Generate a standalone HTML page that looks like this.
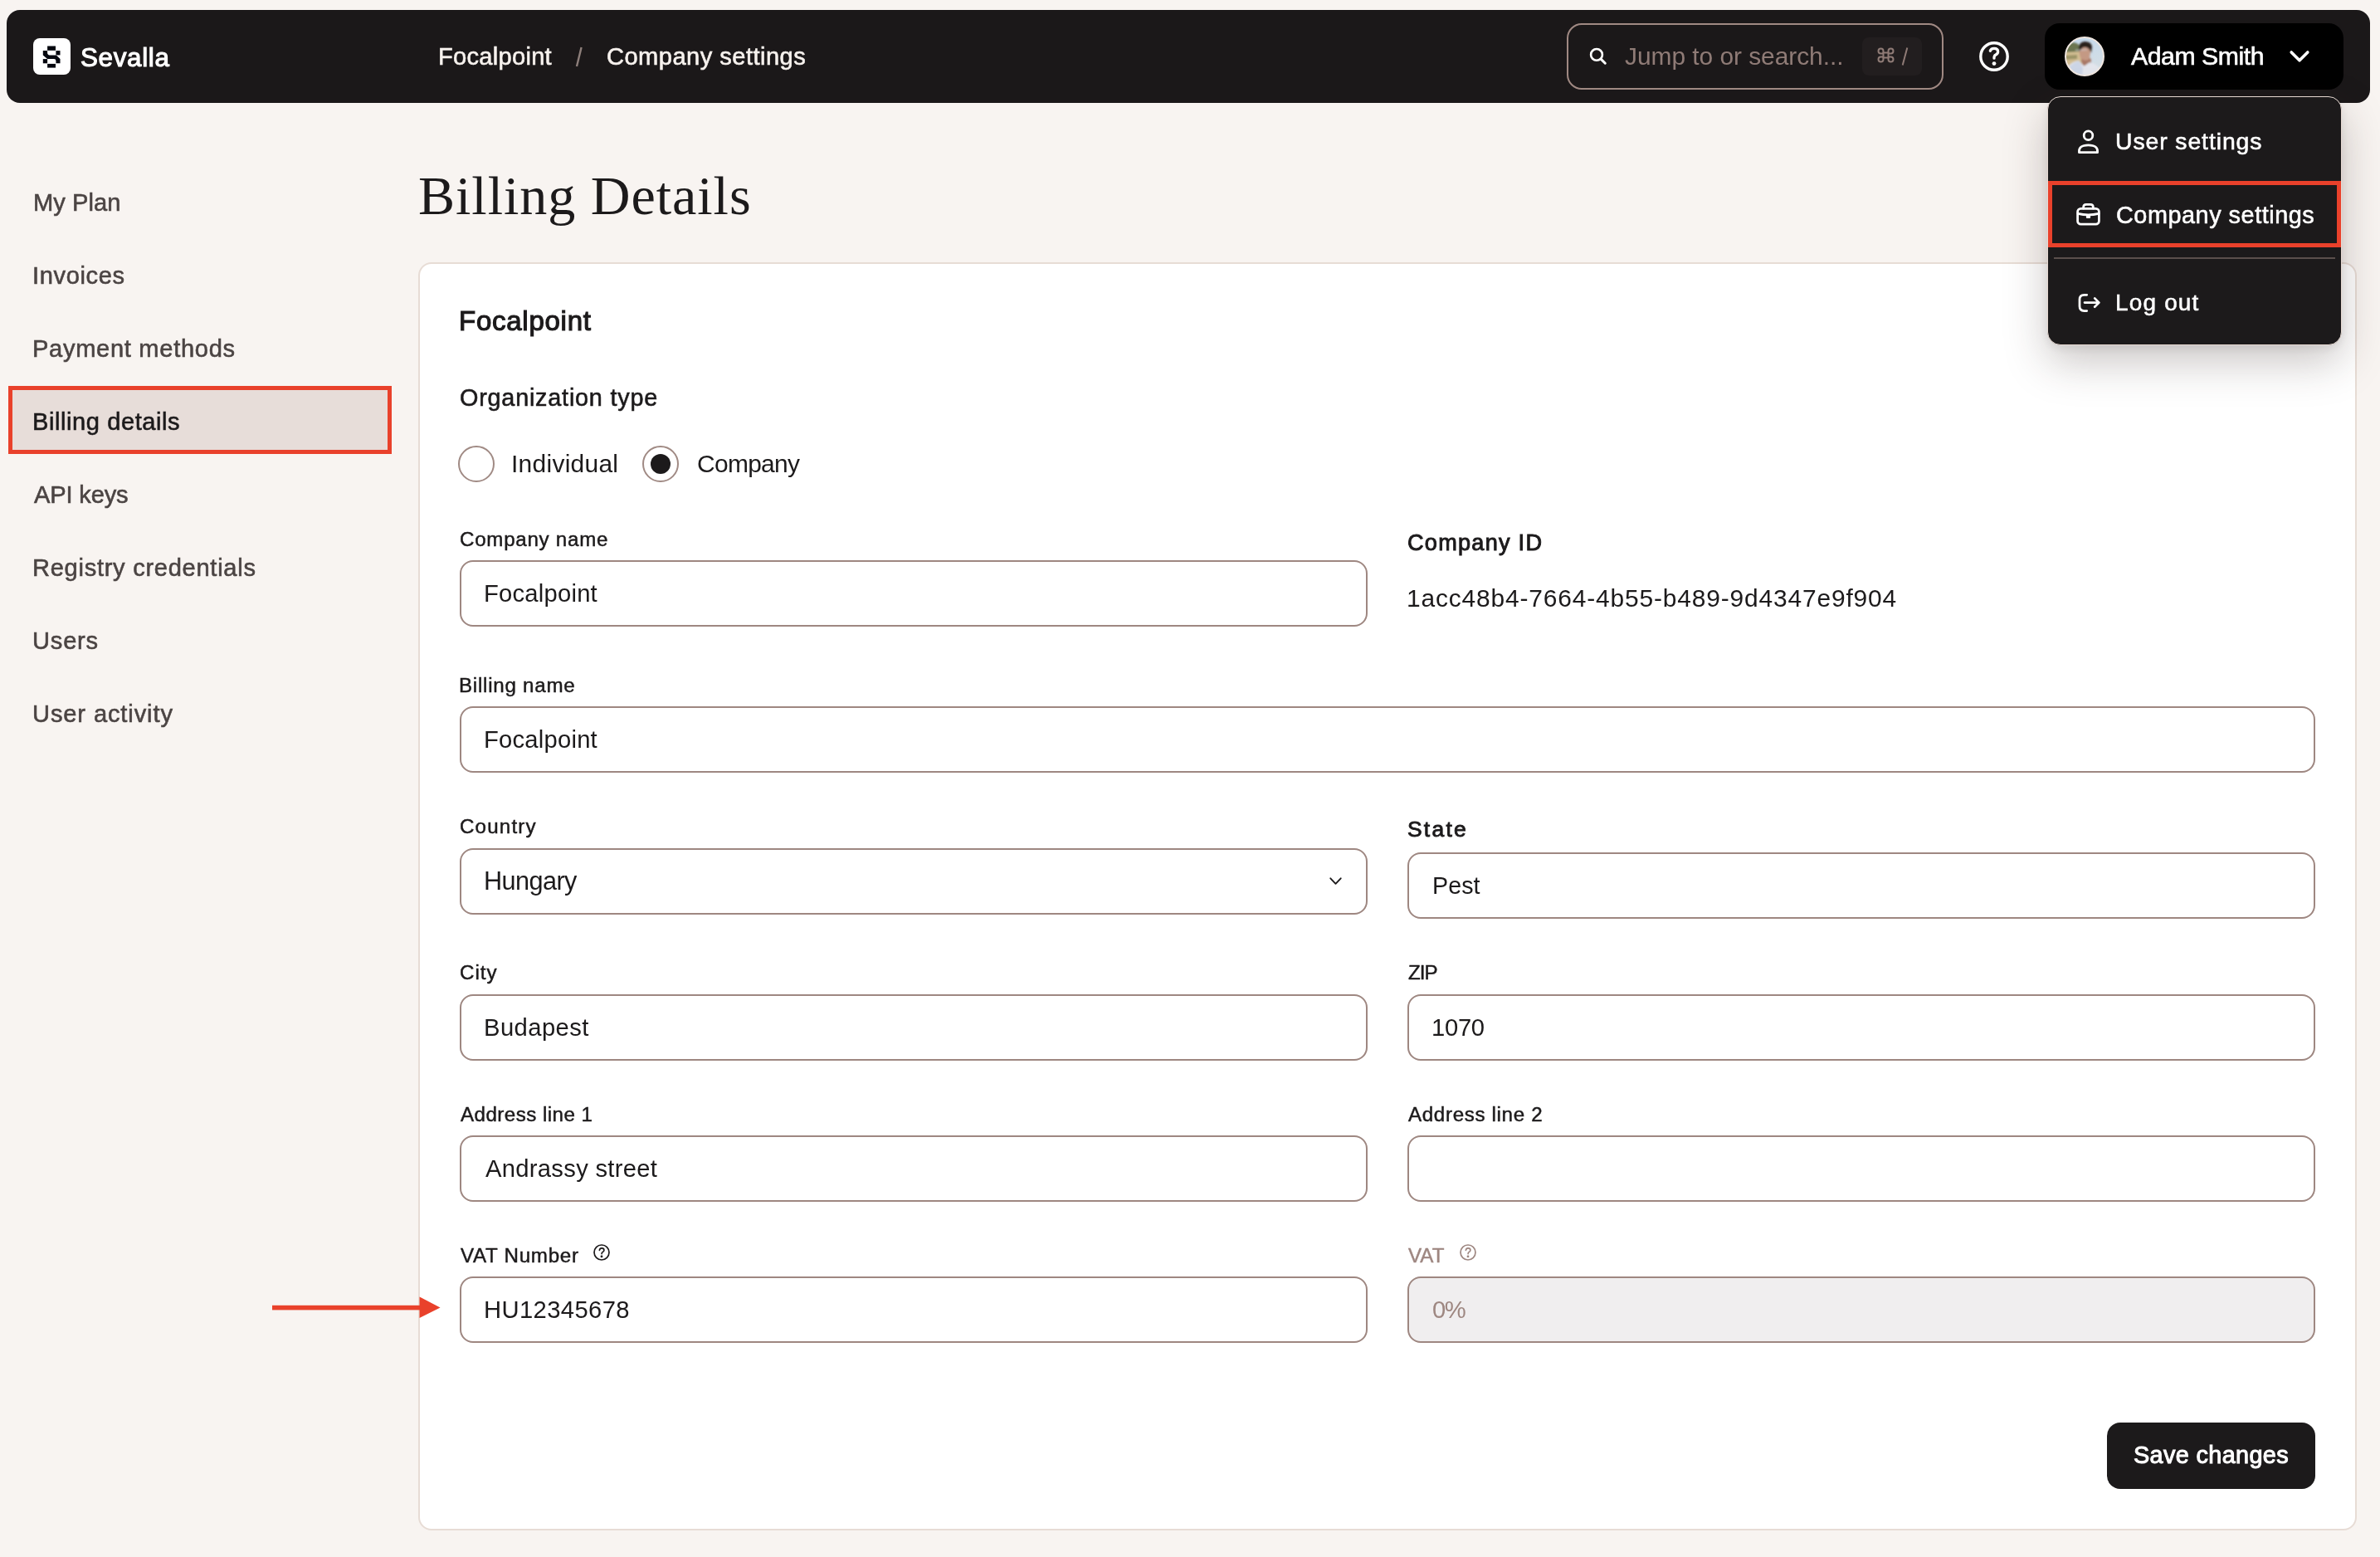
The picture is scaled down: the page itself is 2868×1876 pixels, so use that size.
<!DOCTYPE html><html><head><meta charset="utf-8"><title>Billing Details</title><style>
*{margin:0;padding:0}
html,body{width:2868px;height:1876px;overflow:hidden;background:#f8f4f1}
.b{position:absolute}
.t{position:absolute;will-change:transform}

</style></head><body>
<div class="b" style="left:8px;top:12px;width:2848px;height:112px;border-radius:16px;background:#1b1819;"></div>
<div class="b" style="left:40px;top:46px;width:45px;height:44px;border-radius:8px;background:#fff;"></div>
<svg class="b" style="left:0;top:0" width="120" height="120" viewBox="0 0 120 120">
<g fill="#05070f">
<rect x="57.1" y="55.5" width="9.9" height="5.3"/>
<rect x="67.4" y="61.1" width="5.1" height="5.3"/>
<rect x="51.8" y="71.1" width="5.3" height="5.2"/>
<rect x="57.1" y="76.9" width="9.9" height="4.7"/>
<path d="M51.8 61.1 H57.1 V63.6 Q57.1 66.4 59.8 66.4 H67.8 L72.5 70.9 V76.3 H67.4 V73.2 Q67.4 70.9 65 70.9 H57.1 L51.8 66.4 Z"/>
</g></svg>
<div class="b" style="left:1888px;top:28px;width:454px;height:80px;border-radius:18px;border:2px solid #a08983;box-sizing:border-box;"></div>
<svg class="b" style="left:1900px;top:50px" width="50" height="40" viewBox="1900 50 50 40">
<circle cx="1924" cy="65.9" r="6.9" fill="none" stroke="#fff" stroke-width="2.6"/>
<line x1="1929.4" y1="71.4" x2="1934.3" y2="76.2" stroke="#fff" stroke-width="3" stroke-linecap="round"/>
</svg>
<div class="b" style="left:2244px;top:45px;width:72px;height:46px;border-radius:8px;background:#221e1f;"></div>
<svg class="b" style="left:2250px;top:50px" width="60" height="40" viewBox="2250 50 60 40">
<g fill="none" stroke="#8f7b76" stroke-width="2">
<path d="M2269.5 63.5 h6 v6 h-6 z"/>
<path d="M2269.5 63.5 v-2 a3 3 0 1 0 -3 3 h3"/>
<path d="M2275.5 63.5 v-2 a3 3 0 1 1 3 3 h-3"/>
<path d="M2269.5 69.5 v2 a3 3 0 1 1 -3 -3 h3"/>
<path d="M2275.5 69.5 v2 a3 3 0 1 0 3 -3 h-3"/>
<line x1="2298.3" y1="57.5" x2="2292.7" y2="78.5"/>
</g></svg>
<svg class="b" style="left:2380px;top:45px" width="46" height="46" viewBox="2380 45 46 46">
<circle cx="2403" cy="68" r="16.2" fill="none" stroke="#fff" stroke-width="3.4"/>
<path d="M2398.3 61.3 q0.8 -3 4.7 -3 q4.6 0 4.6 3.9 q0 2.5 -2.6 3.8 q-2 1 -2 3.6 v0.6" fill="none" stroke="#fff" stroke-width="3.3" stroke-linecap="round"/>
<circle cx="2403" cy="76.6" r="2.4" fill="#fff"/>
</svg>
<svg class="b" style="left:685px;top:50px" width="25" height="36" viewBox="685 50 25 36">
<line x1="700.6" y1="57" x2="695" y2="80" stroke="#8e7f7b" stroke-width="2.4"/></svg>
<div class="b" style="left:2464px;top:28px;width:360px;height:80px;border-radius:18px;background:#000;"></div>
<svg class="b" style="left:2486px;top:42px" width="52" height="52" viewBox="2486 42 52 52">
<defs><clipPath id="av"><circle cx="2512" cy="68" r="23"/></clipPath>
<filter id="bl" x="-20%" y="-20%" width="140%" height="140%"><feGaussianBlur stdDeviation="1.0"/></filter>
<linearGradient id="sky" x1="0" y1="0" x2="0.3" y2="1"><stop offset="0" stop-color="#c2d9ef"/><stop offset="1" stop-color="#d6dee3"/></linearGradient></defs>
<g clip-path="url(#av)">
<rect x="2486" y="42" width="52" height="52" fill="url(#sky)"/>
<g filter="url(#bl)">
<path d="M2487 54 Q2491 51 2495 52 Q2500 50 2504 53 L2507 56 L2507 66 L2487 66 Z" fill="#6a7450"/>
<path d="M2487 63 L2507 62 L2509 78 L2500 84 L2487 84 Z" fill="#d2bd92"/>
<path d="M2487 67 L2503 66 L2503 71 L2487 72 Z" fill="#9c9468"/>
<path d="M2508 70 Q2507 76 2512 80 L2519 79 Q2521 74 2519 70 Z" fill="#a97866"/>
<path d="M2506 58 Q2505 68 2508 71 Q2512 74 2517 72 Q2519 68 2519 60 L2517 55 Z" fill="#c49984"/>
<path d="M2505 60 Q2504 51 2512 50 Q2520 50 2521 56 L2520 64 Q2518 58 2514 57 Q2509 56 2506 62 Z" fill="#2a221f"/>
<path d="M2501 60.5 L2515 60" stroke="#cfd3d8" stroke-width="1.2" opacity="0.8"/>
<path d="M2490 94 L2492 80 Q2497 74 2505 73 L2511 80 L2518 75 Q2527 77 2531 84 L2534 94 Z" fill="#e3e5ec"/>
<path d="M2492 94 L2494 80 Q2499 75 2505 73 L2510 82 L2509 94 Z" fill="#ccd5e6"/>
</g>
</g>
<circle cx="2512" cy="68" r="23" fill="none" stroke="#efe6e0" stroke-width="2"/>
</svg>
<svg class="b" style="left:2750px;top:50px" width="45" height="35" viewBox="2750 50 45 35">
<path d="M2761.2 63 L2771 72.8 L2780.8 63" fill="none" stroke="#fff" stroke-width="3.6" stroke-linecap="round" stroke-linejoin="round"/></svg>
<div class="b" style="left:10px;top:465px;width:462px;height:82px;background:#e7ddd9;border:5px solid #e9412b;box-sizing:border-box;"></div>
<div class="b" style="left:504px;top:316px;width:2336px;height:1528px;border-radius:16px;background:#fff;border:2px solid #e7dcd5;box-sizing:border-box;"></div>
<div class="b" style="left:552px;top:537px;width:44px;height:44px;border-radius:50%;border:2px solid #a08a84;box-sizing:border-box;"></div>
<div class="b" style="left:774px;top:537px;width:44px;height:44px;border-radius:50%;border:2px solid #a08a84;box-sizing:border-box;"></div>
<div class="b" style="left:784px;top:547px;width:24px;height:24px;border-radius:50%;background:#1c1a1b;"></div>
<div class="b" style="left:554px;top:675px;width:1094px;height:80px;border-radius:16px;border:2px solid #9e8781;box-sizing:border-box;background:#fff;"></div>
<div class="b" style="left:554px;top:851px;width:2236px;height:80px;border-radius:16px;border:2px solid #9e8781;box-sizing:border-box;background:#fff;"></div>
<div class="b" style="left:554px;top:1022px;width:1094px;height:80px;border-radius:16px;border:2px solid #9e8781;box-sizing:border-box;background:#fff;"></div>
<div class="b" style="left:1696px;top:1027px;width:1094px;height:80px;border-radius:16px;border:2px solid #9e8781;box-sizing:border-box;background:#fff;"></div>
<div class="b" style="left:554px;top:1198px;width:1094px;height:80px;border-radius:16px;border:2px solid #9e8781;box-sizing:border-box;background:#fff;"></div>
<div class="b" style="left:1696px;top:1198px;width:1094px;height:80px;border-radius:16px;border:2px solid #9e8781;box-sizing:border-box;background:#fff;"></div>
<div class="b" style="left:554px;top:1368px;width:1094px;height:80px;border-radius:16px;border:2px solid #9e8781;box-sizing:border-box;background:#fff;"></div>
<div class="b" style="left:1696px;top:1368px;width:1094px;height:80px;border-radius:16px;border:2px solid #9e8781;box-sizing:border-box;background:#fff;"></div>
<div class="b" style="left:554px;top:1538px;width:1094px;height:80px;border-radius:16px;border:2px solid #9e8781;box-sizing:border-box;background:#fff;"></div>
<div class="b" style="left:1696px;top:1538px;width:1094px;height:80px;border-radius:16px;border:2px solid #9e8781;box-sizing:border-box;background:#f0eeef;"></div>
<svg class="b" style="left:1598px;top:1052px" width="24" height="20" viewBox="1598 1052 24 20">
<path d="M1603.3 1058.3 L1609.5 1064.8 L1615.7 1058.3" fill="none" stroke="#1c1a1b" stroke-width="1.9" stroke-linecap="round" stroke-linejoin="round"/></svg>
<svg class="b" style="left:711.2px;top:1494.9px" width="28" height="28" viewBox="711.2 1494.9 28 28">
<circle cx="725.2" cy="1508.9" r="9" fill="none" stroke="#1c1a1b" stroke-width="1.7"/>
<path d="M722.6 1506.3000000000002 q0.4 -2.6 2.7 -2.6 q2.8 0 2.8 2.4 q0 1.6 -1.6 2.3 q-1.2 0.6 -1.2 2.1" fill="none" stroke="#1c1a1b" stroke-width="1.7" stroke-linecap="round"/>
<circle cx="725.2" cy="1513.8000000000002" r="1.4" fill="#1c1a1b"/></svg>
<svg class="b" style="left:1754.9px;top:1494.9px" width="28" height="28" viewBox="1754.9 1494.9 28 28">
<circle cx="1768.9" cy="1508.9" r="9" fill="none" stroke="#9e8781" stroke-width="1.7"/>
<path d="M1766.3000000000002 1506.3000000000002 q0.4 -2.6 2.7 -2.6 q2.8 0 2.8 2.4 q0 1.6 -1.6 2.3 q-1.2 0.6 -1.2 2.1" fill="none" stroke="#9e8781" stroke-width="1.7" stroke-linecap="round"/>
<circle cx="1768.9" cy="1513.8000000000002" r="1.4" fill="#9e8781"/></svg>
<div class="b" style="left:2539px;top:1714px;width:251px;height:80px;border-radius:16px;background:#1c1a1b;"></div>
<svg class="b" style="left:320px;top:1555px" width="220" height="40" viewBox="320 1555 220 40">
<rect x="328" y="1572.8" width="180" height="5.6" fill="#e9412b"/>
<path d="M505.5 1562.5 L530.5 1575.5 L505.5 1588 Z" fill="#e9412b"/></svg>
<div class="t" style="left:97.20px;top:54px;font-family:'Liberation Sans', sans-serif;font-weight:400;font-size:31.397px;line-height:31.397px;letter-spacing:0.6667px;color:#ffffff;white-space:nowrap;-webkit-text-stroke:1.099px #ffffff;">Sevalla</div>
<div class="t" style="left:527.50px;top:54px;font-family:'Liberation Sans', sans-serif;font-weight:400;font-size:29.096px;line-height:29.096px;letter-spacing:0.2778px;color:#f7f2ee;white-space:nowrap;-webkit-text-stroke:0.582px #f7f2ee;">Focalpoint</div>
<div class="t" style="left:731.00px;top:54px;font-family:'Liberation Sans', sans-serif;font-weight:400;font-size:29.096px;line-height:29.096px;letter-spacing:0.4667px;color:#f7f2ee;white-space:nowrap;-webkit-text-stroke:0.582px #f7f2ee;">Company settings</div>
<div class="t" style="left:1958.00px;top:53px;font-family:'Liberation Sans', sans-serif;font-weight:400;font-size:29.942px;line-height:29.942px;letter-spacing:-0.0526px;color:#8f7b76;white-space:nowrap;">Jump to or search...</div>
<div class="t" style="left:2568.00px;top:53px;font-family:'Liberation Sans', sans-serif;font-weight:400;font-size:30.226px;line-height:30.226px;letter-spacing:-0.4444px;color:#ffffff;white-space:nowrap;-webkit-text-stroke:0.605px #ffffff;">Adam Smith</div>
<div class="t" style="left:39.70px;top:230px;font-family:'Liberation Sans', sans-serif;font-weight:400;font-size:29.096px;line-height:29.096px;letter-spacing:0.0833px;color:#4b4443;white-space:nowrap;-webkit-text-stroke:0.582px #4b4443;">My Plan</div>
<div class="t" style="left:38.50px;top:318px;font-family:'Liberation Sans', sans-serif;font-weight:400;font-size:29.096px;line-height:29.096px;letter-spacing:0.6286px;color:#4b4443;white-space:nowrap;-webkit-text-stroke:0.582px #4b4443;">Invoices</div>
<div class="t" style="left:38.50px;top:406px;font-family:'Liberation Sans', sans-serif;font-weight:400;font-size:29.096px;line-height:29.096px;letter-spacing:0.6929px;color:#4b4443;white-space:nowrap;-webkit-text-stroke:0.582px #4b4443;">Payment methods</div>
<div class="t" style="left:38.50px;top:494px;font-family:'Liberation Sans', sans-serif;font-weight:400;font-size:29.096px;line-height:29.096px;letter-spacing:0.5643px;color:#1c1a1b;white-space:nowrap;-webkit-text-stroke:0.582px #1c1a1b;">Billing details</div>
<div class="t" style="left:40.50px;top:582px;font-family:'Liberation Sans', sans-serif;font-weight:400;font-size:29.096px;line-height:29.096px;letter-spacing:-0.1571px;color:#4b4443;white-space:nowrap;-webkit-text-stroke:0.582px #4b4443;">API keys</div>
<div class="t" style="left:38.50px;top:670px;font-family:'Liberation Sans', sans-serif;font-weight:400;font-size:29.096px;line-height:29.096px;letter-spacing:0.7158px;color:#4b4443;white-space:nowrap;-webkit-text-stroke:0.582px #4b4443;">Registry credentials</div>
<div class="t" style="left:38.50px;top:758px;font-family:'Liberation Sans', sans-serif;font-weight:400;font-size:29.096px;line-height:29.096px;letter-spacing:0.8000px;color:#4b4443;white-space:nowrap;-webkit-text-stroke:0.582px #4b4443;">Users</div>
<div class="t" style="left:38.50px;top:846px;font-family:'Liberation Sans', sans-serif;font-weight:400;font-size:29.096px;line-height:29.096px;letter-spacing:0.8833px;color:#4b4443;white-space:nowrap;-webkit-text-stroke:0.582px #4b4443;">User activity</div>
<div class="t" style="left:503.60px;top:203px;font-family:'Liberation Serif', serif;font-weight:400;font-size:66.127px;line-height:66.127px;letter-spacing:0.9429px;color:#1c1a1b;white-space:nowrap;">Billing Details</div>
<div class="t" style="left:553.00px;top:370px;font-family:'Liberation Sans', sans-serif;font-weight:400;font-size:33.057px;line-height:33.057px;letter-spacing:0.7222px;color:#1c1a1b;white-space:nowrap;-webkit-text-stroke:1.157px #1c1a1b;">Focalpoint</div>
<div class="t" style="left:554.00px;top:465px;font-family:'Liberation Sans', sans-serif;font-weight:400;font-size:28.814px;line-height:28.814px;letter-spacing:0.7812px;color:#1c1a1b;white-space:nowrap;-webkit-text-stroke:0.576px #1c1a1b;">Organization type</div>
<div class="t" style="left:616.00px;top:544px;font-family:'Liberation Sans', sans-serif;font-weight:400;font-size:29.942px;line-height:29.942px;letter-spacing:0.2778px;color:#1c1a1b;white-space:nowrap;">Individual</div>
<div class="t" style="left:840.40px;top:544px;font-family:'Liberation Sans', sans-serif;font-weight:400;font-size:29.942px;line-height:29.942px;letter-spacing:-0.6833px;color:#1c1a1b;white-space:nowrap;">Company</div>
<div class="t" style="left:553.90px;top:638px;font-family:'Liberation Sans', sans-serif;font-weight:400;font-size:24.153px;line-height:24.153px;letter-spacing:0.7273px;color:#1c1a1b;white-space:nowrap;-webkit-text-stroke:0.483px #1c1a1b;">Company name</div>
<div class="t" style="left:583.00px;top:701px;font-family:'Liberation Sans', sans-serif;font-weight:400;font-size:29.215px;line-height:29.215px;letter-spacing:0.2222px;color:#1c1a1b;white-space:nowrap;">Focalpoint</div>
<div class="t" style="left:1695.60px;top:640px;font-family:'Liberation Sans', sans-serif;font-weight:400;font-size:27.109px;line-height:27.109px;letter-spacing:1.2667px;color:#1c1a1b;white-space:nowrap;-webkit-text-stroke:0.949px #1c1a1b;">Company ID</div>
<div class="t" style="left:1694.60px;top:706px;font-family:'Liberation Sans', sans-serif;font-weight:400;font-size:29.942px;line-height:29.942px;letter-spacing:0.8343px;color:#1c1a1b;white-space:nowrap;">1acc48b4-7664-4b55-b489-9d4347e9f904</div>
<div class="t" style="left:553.00px;top:814px;font-family:'Liberation Sans', sans-serif;font-weight:400;font-size:24.153px;line-height:24.153px;letter-spacing:0.7500px;color:#1c1a1b;white-space:nowrap;-webkit-text-stroke:0.483px #1c1a1b;">Billing name</div>
<div class="t" style="left:583.00px;top:877px;font-family:'Liberation Sans', sans-serif;font-weight:400;font-size:29.215px;line-height:29.215px;letter-spacing:0.2222px;color:#1c1a1b;white-space:nowrap;">Focalpoint</div>
<div class="t" style="left:554.00px;top:984px;font-family:'Liberation Sans', sans-serif;font-weight:400;font-size:24.153px;line-height:24.153px;letter-spacing:1.1667px;color:#1c1a1b;white-space:nowrap;-webkit-text-stroke:0.483px #1c1a1b;">Country</div>
<div class="t" style="left:583.00px;top:1046px;font-family:'Liberation Sans', sans-serif;font-weight:400;font-size:30.669px;line-height:30.669px;letter-spacing:-0.5833px;color:#1c1a1b;white-space:nowrap;">Hungary</div>
<div class="t" style="left:1696.00px;top:986px;font-family:'Liberation Sans', sans-serif;font-weight:400;font-size:26.418px;line-height:26.418px;letter-spacing:2.2500px;color:#1c1a1b;white-space:nowrap;-webkit-text-stroke:0.925px #1c1a1b;">State</div>
<div class="t" style="left:1725.70px;top:1053px;font-family:'Liberation Sans', sans-serif;font-weight:400;font-size:28.634px;line-height:28.634px;letter-spacing:0.1000px;color:#1c1a1b;white-space:nowrap;">Pest</div>
<div class="t" style="left:554.00px;top:1160px;font-family:'Liberation Sans', sans-serif;font-weight:400;font-size:24.153px;line-height:24.153px;letter-spacing:1.0000px;color:#1c1a1b;white-space:nowrap;-webkit-text-stroke:0.483px #1c1a1b;">City</div>
<div class="t" style="left:583.00px;top:1224px;font-family:'Liberation Sans', sans-serif;font-weight:400;font-size:29.215px;line-height:29.215px;letter-spacing:0.4286px;color:#1c1a1b;white-space:nowrap;">Budapest</div>
<div class="t" style="left:1697.00px;top:1160px;font-family:'Liberation Sans', sans-serif;font-weight:400;font-size:24.153px;line-height:24.153px;letter-spacing:-1.0000px;color:#1c1a1b;white-space:nowrap;-webkit-text-stroke:0.483px #1c1a1b;">ZIP</div>
<div class="t" style="left:1725.00px;top:1224px;font-family:'Liberation Sans', sans-serif;font-weight:400;font-size:29.215px;line-height:29.215px;letter-spacing:-0.3000px;color:#1c1a1b;white-space:nowrap;">1070</div>
<div class="t" style="left:554.50px;top:1331px;font-family:'Liberation Sans', sans-serif;font-weight:400;font-size:24.153px;line-height:24.153px;letter-spacing:0.4615px;color:#1c1a1b;white-space:nowrap;-webkit-text-stroke:0.483px #1c1a1b;">Address line 1</div>
<div class="t" style="left:585.00px;top:1394px;font-family:'Liberation Sans', sans-serif;font-weight:400;font-size:29.215px;line-height:29.215px;letter-spacing:0.2857px;color:#1c1a1b;white-space:nowrap;">Andrassy street</div>
<div class="t" style="left:1696.80px;top:1331px;font-family:'Liberation Sans', sans-serif;font-weight:400;font-size:24.153px;line-height:24.153px;letter-spacing:0.6615px;color:#1c1a1b;white-space:nowrap;-webkit-text-stroke:0.483px #1c1a1b;">Address line 2</div>
<div class="t" style="left:554.50px;top:1501px;font-family:'Liberation Sans', sans-serif;font-weight:400;font-size:24.153px;line-height:24.153px;letter-spacing:0.7222px;color:#1c1a1b;white-space:nowrap;-webkit-text-stroke:0.483px #1c1a1b;">VAT Number</div>
<div class="t" style="left:583.00px;top:1564px;font-family:'Liberation Sans', sans-serif;font-weight:400;font-size:29.215px;line-height:29.215px;letter-spacing:0.3889px;color:#1c1a1b;white-space:nowrap;">HU12345678</div>
<div class="t" style="left:1696.80px;top:1501px;font-family:'Liberation Sans', sans-serif;font-weight:400;font-size:24.153px;line-height:24.153px;letter-spacing:0.0500px;color:#9e8781;white-space:nowrap;-webkit-text-stroke:0.483px #9e8781;">VAT</div>
<div class="t" style="left:1726.00px;top:1564px;font-family:'Liberation Sans', sans-serif;font-weight:400;font-size:29.215px;line-height:29.215px;letter-spacing:-1.5000px;color:#9e8781;white-space:nowrap;">0%</div>
<div class="t" style="left:2570.80px;top:1739px;font-family:'Liberation Sans', sans-serif;font-weight:400;font-size:28.838px;line-height:28.838px;letter-spacing:0.3545px;color:#ffffff;white-space:nowrap;-webkit-text-stroke:1.009px #ffffff;">Save changes</div>
<div class="b" style="left:2467px;top:116px;width:355px;height:300px;border-radius:16px;background:#1c1a1b;border:1.5px solid #e6d9d2;box-sizing:border-box;box-shadow:0 20px 52px rgba(50,35,30,0.26), 0 4px 12px rgba(0,0,0,0.08);"></div>
<div class="b" style="left:2468px;top:218px;width:353px;height:80px;border:5px solid #e9412b;box-sizing:border-box;"></div>
<div class="b" style="left:2475px;top:310px;width:339px;height:2px;background:#5a4f4c;"></div>
<svg class="b" style="left:2495px;top:145px" width="45" height="240" viewBox="2495 145 45 240">
<g fill="none" stroke="#fff" stroke-width="2.75" stroke-linecap="round" stroke-linejoin="round">
<circle cx="2516.5" cy="163.2" r="5.3"/>
<path d="M2505.4 183.6 Q2504.5 174.8 2516.5 174.8 Q2528.5 174.8 2527.6 183.6 Z"/>
<rect x="2503.6" y="251.3" width="25.8" height="18.9" rx="3.8"/>
<path d="M2510.6 251 v-1.3 q0 -3.3 3.3 -3.3 h5.2 q3.3 0 3.3 3.3 v1.3"/>
<path d="M2504 257.3 Q2516.5 260.3 2529 257.3"/>
<path d="M2515 259.6 v2.3 h3 v-2.3" fill="#fff" stroke-width="2.2"/>
<path d="M2514.7 355.3 h-3.2 q-5.5 0 -5.5 5.5 v8.2 q0 5.5 5.5 5.5 h3.2"/>
<path d="M2512 364.6 h17.3 M2524.2 359.4 L2529.4 364.6 L2524.2 369.8"/>
</g></svg>
<div class="t" style="left:2549.30px;top:156px;font-family:'Liberation Sans', sans-serif;font-weight:400;font-size:28.390px;line-height:28.390px;letter-spacing:0.9083px;color:#ffffff;white-space:nowrap;-webkit-text-stroke:0.568px #ffffff;">User settings</div>
<div class="t" style="left:2550.30px;top:245px;font-family:'Liberation Sans', sans-serif;font-weight:400;font-size:28.814px;line-height:28.814px;letter-spacing:0.5467px;color:#ffffff;white-space:nowrap;-webkit-text-stroke:0.576px #ffffff;">Company settings</div>
<div class="t" style="left:2549.30px;top:351px;font-family:'Liberation Sans', sans-serif;font-weight:400;font-size:27.966px;line-height:27.966px;letter-spacing:1.1833px;color:#ffffff;white-space:nowrap;-webkit-text-stroke:0.559px #ffffff;">Log out</div>
</body></html>
